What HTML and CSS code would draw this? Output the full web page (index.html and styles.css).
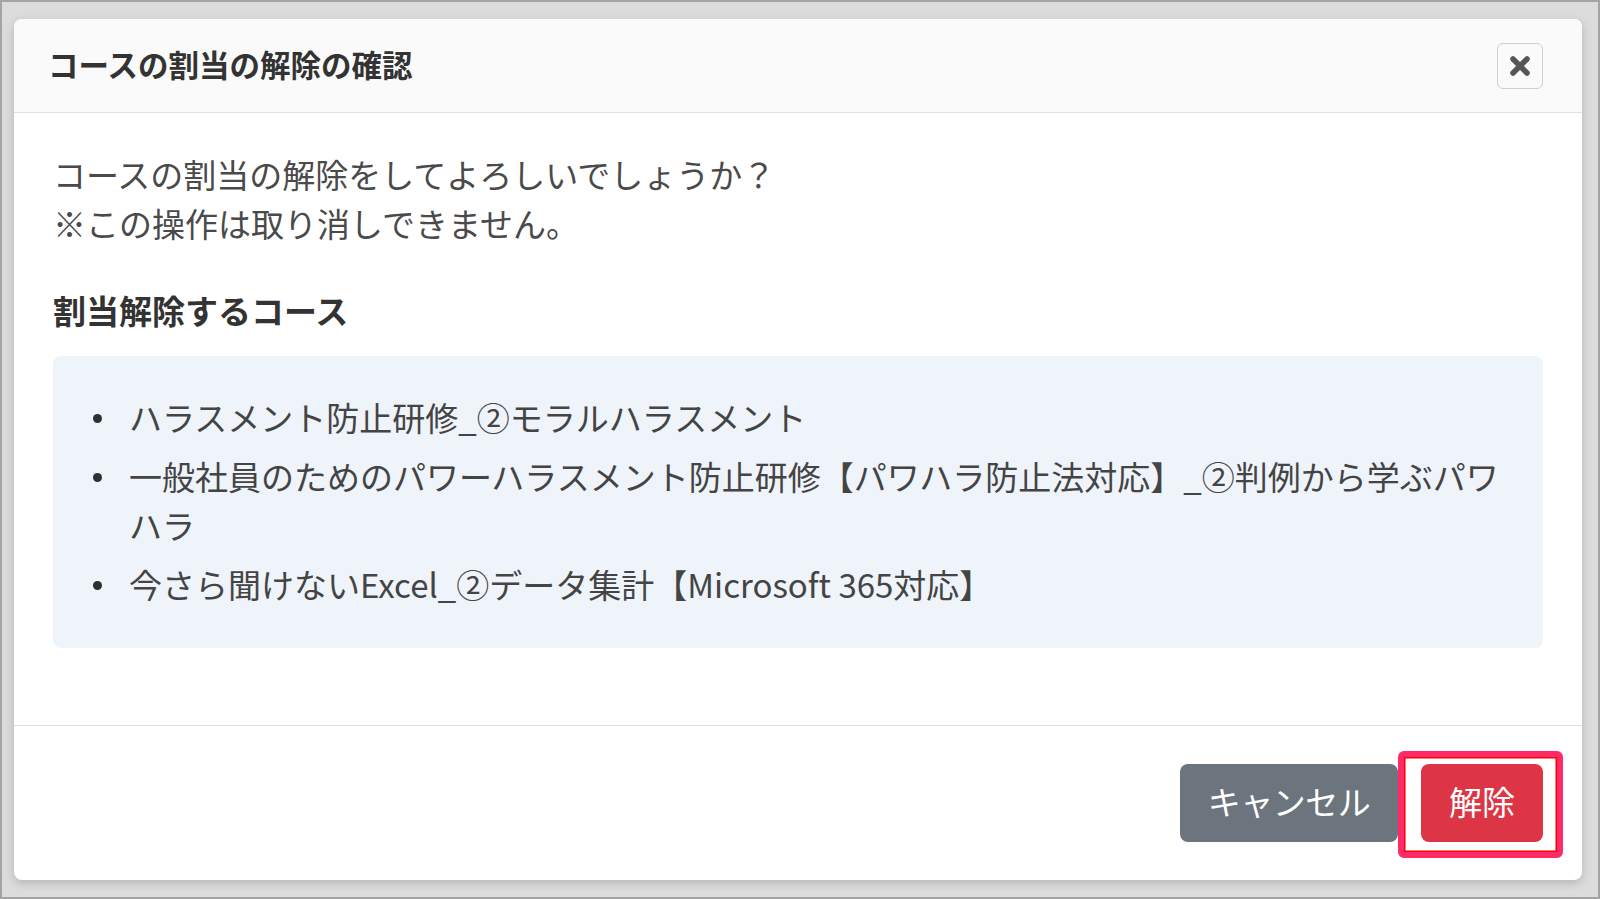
FILE: index.html
```html
<!DOCTYPE html>
<html lang="ja">
<head>
  <meta charset="UTF-8" />
  <meta name="viewport" content="width=device-width, initial-scale=1.0" />
  <title>コースの割当の解除の確認</title>
  <link rel="stylesheet" href="styles.css">
</head>
<body>
  <div class="frame">
    <!-- Confirm dialog -->
    <div class="modal">
      <div class="modal-header">
        <h5 class="modal-title">コースの割当の解除の確認</h5>
        <button class="close-btn" aria-label="閉じる">
          <svg width="22" height="22" viewBox="0 0 22 22">
            <path d="M4 4 L18 18 M18 4 L4 18" stroke="#555" stroke-width="5.5" stroke-linecap="round" fill="none"/>
          </svg>
        </button>
      </div>

      <div class="modal-body">
        <p class="lead-text">コースの割当の解除をしてよろしいでしょうか？<br>※この操作は取り消しできません。</p>
        <h6 class="section-title">割当解除するコース</h6>
        <div class="course-box">
          <ul class="course-list">
            <li><span>ハラスメント防止研修_②モラルハラスメント</span></li>
            <li><span>一般社員のためのパワーハラスメント防止研修【パワハラ防止法対応】_②判例から学ぶパワハラ</span></li>
            <li><span>今さら聞けないExcel_②データ集計【Microsoft 365対応】</span></li>
          </ul>
        </div>
      </div>

      <div class="modal-footer">
        <button class="btn btn-secondary">キャンセル</button>
        <button class="btn btn-danger">解除</button>
        <!-- annotation highlight -->
        <div class="mark"></div>
      </div>
    </div>
  </div>
</body>
</html>
```

FILE: styles.css
```css
/* ===== Base ===== */
* { box-sizing: border-box; margin: 0; padding: 0; }
body {
  background: #dcdcdc;
  font-family: "Noto Sans CJK JP", "Noto Sans", sans-serif;
  color: #444;
}

.frame {
  width: 1600px;
  height: 899px;
  border: 2px solid #a4a4a4;
  padding: 17px 16px 0 12px;
  overflow: hidden;
}

/* ===== Modal ===== */
.modal {
  width: 1568px;
  height: 861px;
  background: #fff;
  border-radius: 8px;
  box-shadow: 0 3px 10px rgba(0, 0, 0, 0.18);
  display: flex;
  flex-direction: column;
  overflow: hidden;
}

.modal-header {
  height: 94px;
  flex: none;
  display: flex;
  align-items: center;
  justify-content: space-between;
  padding: 0 39px 0 34px;
  background: #fafafa;
  border-bottom: 1px solid #dee2e6;
}
.modal-title {
  font-size: 30.5px;
  font-weight: 700;
  color: #333;
  line-height: 1.2;
  margin-top: -3px;
}
.close-btn {
  width: 46px;
  height: 46px;
  border: 1.5px solid #cfcfcf;
  border-radius: 6px;
  background: #fafafa;
  display: flex;
  align-items: center;
  justify-content: center;
  cursor: pointer;
}

/* ===== Body ===== */
.modal-body {
  flex: 1;
  padding: 37px 39px 0 39px;
  font-size: 33px;
  line-height: 49px;
}
.lead-text { color: #4a4a4a; }
.section-title {
  margin-top: 38px;
  font-size: 33px;
  font-weight: 700;
  color: #333;
  line-height: 49px;
}

.course-box {
  margin-top: 21px;
  background: #eff3fa;
  border-radius: 8px;
  padding: 37px 28px 39px 40px;
}
.course-list { list-style: none; }
.course-list li {
  display: flex;
  gap: 27px;
  color: #444;
}
.course-list li + li { margin-top: 10px; }
.course-list li::before {
  content: "";
  flex: none;
  width: 9px;
  height: 9px;
  border-radius: 50%;
  background: #2f2f2f;
  margin-top: 21px;
}

/* ===== Footer ===== */
.modal-footer {
  position: relative;
  flex: none;
  display: flex;
  justify-content: flex-end;
  gap: 23px;
  padding: 38px 39px;
  border-top: 1px solid #dee2e6;
}
.btn {
  font-family: inherit;
  font-size: 33px;
  line-height: 50px;
  height: 78px;
  padding: 0 0 5px;
  white-space: nowrap;
  border: none;
  border-radius: 8px;
  color: #fff;
  cursor: pointer;
}
.btn-secondary { background: #6c757d; width: 218px; letter-spacing: -0.5px; }
.btn-danger { background: #dc3545; width: 122px; }

.mark {
  position: absolute;
  left: 1384px;
  top: 25px;
  width: 165px;
  height: 107px;
  border: 6px solid #ff2a68;
  border-radius: 6px;
  box-shadow: inset 0 0 0 1.5px #ff0000;
  pointer-events: none;
}
```
